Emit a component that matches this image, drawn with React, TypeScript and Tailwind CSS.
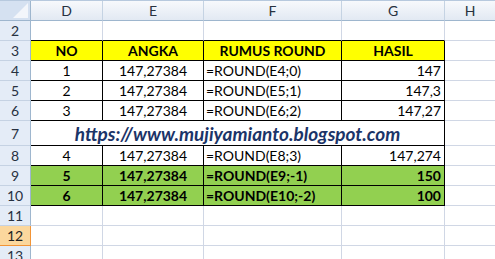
const cols = ["D", "E", "F", "G", "H"];

type Row = {
  no: string;
  angka: string;
  rumus: string;
  hasil: string;
  tone: "plain" | "head" | "green";
};

const rows: Record<number, Row> = {
  3: { no: "NO", angka: "ANGKA", rumus: "RUMUS ROUND", hasil: "HASIL", tone: "head" },
  4: { no: "1", angka: "147,27384", rumus: "=ROUND(E4;0)", hasil: "147", tone: "plain" },
  5: { no: "2", angka: "147,27384", rumus: "=ROUND(E5;1)", hasil: "147,3", tone: "plain" },
  6: { no: "3", angka: "147,27384", rumus: "=ROUND(E6;2)", hasil: "147,27", tone: "plain" },
  8: { no: "4", angka: "147,27384", rumus: "=ROUND(E8;3)", hasil: "147,274", tone: "plain" },
  9: { no: "5", angka: "147,27384", rumus: "=ROUND(E9;-1)", hasil: "150", tone: "green" },
  10: { no: "6", angka: "147,27384", rumus: "=ROUND(E10;-2)", hasil: "100", tone: "green" },
};

const grid = "border-r border-b border-[#d0d7e5]";
const black = "border-r border-b border-black";

function RowHeader({ n, tall, active }: { n: number; tall?: boolean; active?: boolean }) {
  return (
    <div
      className={`flex items-center justify-center border-r border-b text-[14px] ${
        tall ? "h-[25px]" : "h-[20px]"
      } ${
        active
          ? "bg-[#fbd79d] border-[#f29436] text-[#1f1f1f]"
          : "bg-[#e4ecf7] border-r-[#9eb6ce] border-b-[#c5d2e3] text-[#27313f]"
      }`}
    >
      {n}
    </div>
  );
}

function DataRow({ n, row }: { n: number; row: Row }) {
  const bg =
    row.tone === "head" ? "bg-[#ffff00]" : row.tone === "green" ? "bg-[#92d050]" : "bg-white";
  const weight = row.tone === "plain" ? "font-normal" : "font-bold";
  const cell = `h-[20px] flex items-center ${black} ${bg} ${weight} text-[14px] text-black`;
  return (
    <>
      <RowHeader n={n} />
      <div className={`${cell} justify-center`}>{row.no}</div>
      <div className={`${cell} justify-center`}>{row.angka}</div>
      <div className={`${cell} ${row.tone === "head" ? "justify-center" : "pl-[2px]"}`}>
        {row.rumus}
      </div>
      <div className={`${cell} ${row.tone === "head" ? "justify-center" : "justify-end pr-[3px]"}`}>
        {row.hasil}
      </div>
      <div className={`h-[20px] bg-white ${grid}`} />
    </>
  );
}

function EmptyRow({ n, active, edge }: { n: number; active?: boolean; edge?: boolean }) {
  return (
    <>
      <RowHeader n={n} active={active} />
      {cols.map((c, i) => (
        <div
          key={c}
          className={`h-[20px] bg-white border-r border-b ${
            edge && i < 4 ? "border-r-[#d0d7e5] border-b-black" : "border-[#d0d7e5]"
          }`}
        />
      ))}
    </>
  );
}

export default function App() {
  return (
    <div
      className="w-[495px] h-[259px] overflow-hidden bg-white"
      style={{ fontFamily: "Lato, 'Open Sans', sans-serif" }}
    >
      <div className="grid grid-cols-[31px_72px_101px_138px_103px_51px] border-t border-[#b7c9de]">
        {/* select-all corner */}
        <div className="relative h-[20px] bg-[#d5e1f1] border-r border-b border-[#9eb6ce]">
          <svg className="absolute right-[2px] bottom-[2px]" width="15" height="15" viewBox="0 0 15 15">
            <polygon points="15,0 15,15 0,15" fill="#f3f6fb" />
          </svg>
        </div>
        {cols.map((c) => (
          <div
            key={c}
            className="h-[20px] flex items-center justify-center bg-gradient-to-b from-[#f7f9fc] to-[#e2e9f3] border-r border-r-[#c5d3e3] border-b border-b-[#9eb6ce] text-[14px] text-[#27313f]"
          >
            {c}
          </div>
        ))}

        <EmptyRow n={2} edge />
        {[3, 4, 5, 6].map((n) => (
          <DataRow key={n} n={n} row={rows[n]} />
        ))}

        {/* merged link row */}
        <RowHeader n={7} tall />
        <div className="col-span-4 h-[25px] flex items-center justify-center bg-white border-r border-b border-black">
          <span className="text-[19px] font-bold italic text-[#1b3468] leading-none">
            https://www.mujiyamianto.blogspot.com
          </span>
        </div>
        <div className={`h-[25px] bg-white ${grid}`} />

        {[8, 9, 10].map((n) => (
          <DataRow key={n} n={n} row={rows[n]} />
        ))}
        <EmptyRow n={11} />
        <EmptyRow n={12} active />
        <EmptyRow n={13} />
      </div>
    </div>
  );
}
